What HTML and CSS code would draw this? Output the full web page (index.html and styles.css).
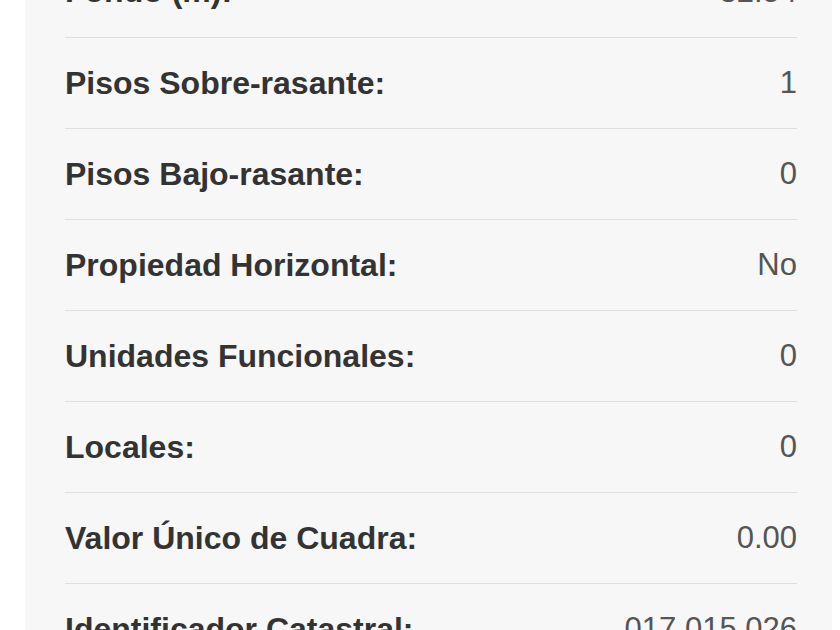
FILE: index.html
```html
<!DOCTYPE html>
<html lang="es">
<head>
  <meta charset="UTF-8"/>
  <meta name="viewport" content="width=device-width, initial-scale=1.0"/>
  <title>Datos de la parcela</title>
  <link rel="stylesheet" href="styles.css">
</head>
<body>
  <div class="panel">
    <div class="row"><span class="label">Fondo (m):</span><span class="value">32.54</span></div>
    <div class="row"><span class="label">Pisos Sobre-rasante:</span><span class="value">1</span></div>
    <div class="row"><span class="label">Pisos Bajo-rasante:</span><span class="value">0</span></div>
    <div class="row"><span class="label">Propiedad Horizontal:</span><span class="value">No</span></div>
    <div class="row"><span class="label">Unidades Funcionales:</span><span class="value">0</span></div>
    <div class="row"><span class="label">Locales:</span><span class="value">0</span></div>
    <div class="row"><span class="label">Valor Único de Cuadra:</span><span class="value">0.00</span></div>
    <div class="row"><span class="label">Identificador Catastral:</span><span class="value">017.015.026</span></div>
  </div>
</body>
</html>
```

FILE: styles.css
```css
body { margin: 0; background: #fff; font-family: "Liberation Sans", Arial, sans-serif; overflow: hidden; }
.panel { margin: -54px 0 0 25px; width: 807px; box-sizing: border-box; background: #f7f7f7; padding: 0 35px 0 40px; }
.row { display: flex; justify-content: space-between; align-items: center; height: 90px; border-top: 1px solid #dedede; }
.row:first-child { border-top: none; height: 91px; }
.label { font-size: 32px; font-weight: bold; color: #333; }
.value { font-size: 31px; color: #555; }
```
